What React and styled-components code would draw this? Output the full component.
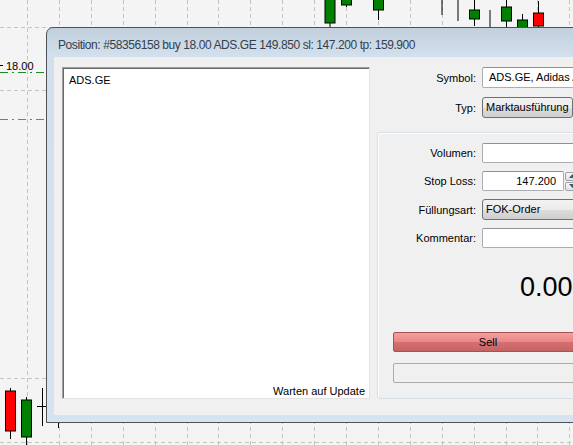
import React from 'react'
import styled, { createGlobalStyle } from 'styled-components'

const GlobalStyle = createGlobalStyle`
  html, body {
    margin: 0;
    padding: 0;
    background: #f4f4f4;
    overflow: hidden;
  }
  body {
    font-family: "Liberation Sans", Arial, sans-serif;
  }
`

// chart grid + candles behind the order window
const gridX = Array.from({ length: 18 }, (_, i) => 27 + i * 31.9)
const gridY = [27, 90, 378, 442]

const candles = [
  { x: 330, o: -10, c: 23, hi: -10, lo: 27, up: true },
  { x: 346.5, o: -10, c: 5, hi: -10, lo: 7, up: true },
  { x: 378.5, o: -10, c: 10, hi: -10, lo: 20, up: true },
  { x: 474.5, o: 10, c: 19, hi: 0, lo: 26, up: true },
  { x: 506.5, o: 7, c: 21, hi: 0, lo: 30, up: true },
  { x: 522.5, o: 20, c: 32, hi: 14, lo: 32, up: true },
  { x: 538.5, o: 13, c: 26, hi: 1, lo: 27, up: false },
  { x: 10.5, o: 391, c: 431, hi: 388, lo: 439, up: false },
  { x: 26.5, o: 400, c: 437, hi: 397, lo: 446, up: true },
]

const wicks = [
  { x: 442, y1: -2, y2: 15 },
  { x: 458, y1: -2, y2: 21 },
  { x: 490, y1: 10, y2: 30 },
  { x: 42.5, y1: 388, y2: 426 },
  { x: 58.5, y1: 422, y2: 428 },
]

const Screen = styled.div`
  position: relative;
  width: 573px;
  height: 445px;
  overflow: hidden;
  background: #f4f4f4;
`

const ChartLayer = styled.svg`
  position: absolute;
  left: 0;
  top: 0;
  display: block;
`

const LevelTag = styled.span`
  position: absolute;
  left: 6px;
  top: 60px;
  font-size: 11px;
  line-height: 13px;
  color: #000;
`

const Window = styled.div`
  position: absolute;
  left: 46px;
  top: 27px;
  width: 570px;
  height: 396px;
  box-sizing: border-box;
  border: 1px solid #4f5357;
  border-radius: 7px 7px 0 0;
  background: linear-gradient(#c2d0de, #d2dfec 28px, #d6e3f1);
  padding: 0 7px 7px;
  display: flex;
  flex-direction: column;
  overflow: hidden;
`

const TitleBar = styled.div`
  height: 29px;
  box-sizing: border-box;
  padding: 4px 0 0 4px;
  display: flex;
  align-items: center;
  font-size: 12px;
  letter-spacing: -0.42px;
  color: #34404c;
  white-space: nowrap;
`

const Client = styled.div`
  height: 358px;
  box-sizing: border-box;
  background: #f0f0f0;
  display: flex;
  align-items: flex-start;
  gap: 7px;
  padding: 10px 0 0 8px;
`

const ListBox = styled.div`
  width: 308px;
  height: 332px;
  flex: none;
  box-sizing: border-box;
  background: #fff;
  border-top: 1px solid #a0a0a0;
  border-left: 1px solid #a0a0a0;
  border-right: 1px solid #e3e3e3;
  border-bottom: 1px solid #e3e3e3;
  box-shadow: inset 1px 1px 0 #696969, inset -1px -1px 0 #fff;
  padding: 6px 4px 0 6px;
  display: flex;
  flex-direction: column;
  justify-content: space-between;
  font-size: 11px;
  line-height: 13px;
  color: #000;
`

const StatusLine = styled.div`
  text-align: right;
`

const Side = styled.div`
  width: 222px;
  flex: none;
  display: flex;
  flex-direction: column;
`

const Form = styled.div`
  display: grid;
  grid-template-columns: ${p => p.$labelWidth}px 1fr;
  column-gap: 6px;
  row-gap: ${p => p.$rowGap}px;
  align-items: center;
`

const Label = styled.label`
  text-align: right;
  font-size: 11px;
  color: #000;
  white-space: nowrap;
`

const TextBox = styled.div`
  height: ${p => p.$h}px;
  box-sizing: border-box;
  background: #fff;
  border: 1px solid #abadb3;
  border-top-color: #8e9198;
  border-radius: 2px;
  font-size: 11px;
  line-height: ${p => p.$h - 2}px;
  padding: 0 ${p => (p.$right ? 7 : 6)}px;
  text-align: ${p => (p.$right ? 'right' : 'left')};
  white-space: nowrap;
  overflow: hidden;
  color: #000;
  width: ${p => (p.$w ? `${p.$w}px` : 'auto')};
`

const Combo = styled.div`
  height: ${p => p.$h}px;
  box-sizing: border-box;
  border: 1px solid #707070;
  border-radius: 3px;
  background: linear-gradient(#f2f2f2, #ebebeb 50%, #dddddd 51%, #cfcfcf);
  font-size: 11px;
  line-height: ${p => p.$h - 2}px;
  padding: 0 3px;
  white-space: nowrap;
  overflow: hidden;
  width: ${p => (p.$w ? `${p.$w}px` : 'auto')};
`

const SpinRow = styled.div`
  display: flex;
  align-items: center;
  gap: 1px;
`

const Spin = styled.div`
  display: flex;
  flex-direction: column;
  gap: 1px;
`

const SpinButton = styled.div`
  width: 14px;
  height: 9px;
  box-sizing: border-box;
  border: 1px solid #9aa3ac;
  border-radius: 2px;
  background: linear-gradient(#f4f6f8, #dfe4ea);
  display: flex;
  align-items: center;
  justify-content: center;
`

const Group = styled.div`
  margin-top: 14px;
  height: 267px;
  box-sizing: border-box;
  border: 1px solid #d5dfe5;
  border-radius: 3px;
  box-shadow: inset 1px 1px 0 #fff;
  padding-top: 10px;
  display: flex;
  flex-direction: column;
`

const Price = styled.div`
  margin-top: 23px;
  padding-left: 142px;
  font-size: 27px;
  line-height: 32px;
  color: #000;
  white-space: nowrap;
`

const SellButton = styled.div`
  margin: 29px 15px 0;
  height: 20px;
  box-sizing: border-box;
  border: 1px solid #a55252;
  border-radius: 2px;
  background: linear-gradient(#f59e9e, #e98686 50%, #d67070 51%, #c46464);
  font-size: 11px;
  line-height: 18px;
  text-align: center;
  color: #000;
`

const EmptyButton = styled.div`
  margin: 11px 15px 0;
  height: 20px;
  box-sizing: border-box;
  border: 1px solid #acacac;
  border-radius: 2px;
  background: #f0f0f0;
`

function Arrow({ up }) {
  return (
    <svg width="7" height="4" viewBox="0 0 7 4">
      <path d={up ? 'M0 4 L3.5 0 L7 4 Z' : 'M0 0 L3.5 4 L7 0 Z'} fill="#4a5560" />
    </svg>
  )
}

function Chart() {
  return (
    <ChartLayer width="573" height="445" viewBox="0 0 573 445">
      {gridX.map(x => (
        <line key={'v' + x} x1={Math.round(x) + 0.5} y1="0" x2={Math.round(x) + 0.5} y2="445"
          stroke="#c4c4c4" strokeDasharray="4 3" />
      ))}
      {gridY.map(y => (
        <line key={'h' + y} x1="0" y1={y + 0.5} x2="573" y2={y + 0.5}
          stroke="#c4c4c4" strokeDasharray="4 3" />
      ))}
      <line x1="0" y1="72.5" x2="46" y2="72.5" stroke="#1f8a1f" strokeDasharray="8 4 2 4" />
      <line x1="0" y1="119.5" x2="46" y2="119.5" stroke="#e4572a" strokeDasharray="8 4 2 4" />
      <line x1="0" y1="65.5" x2="3" y2="65.5" stroke="#000" />
      {candles.map(c => (
        <g key={'c' + c.x}>
          <line x1={c.x} y1={c.hi} x2={c.x} y2={c.lo} stroke="#000" />
          <rect x={c.x - 5} y={c.o} width="10" height={c.c - c.o}
            fill={c.up ? '#008000' : '#ff0000'} stroke="#000" />
        </g>
      ))}
      {wicks.map(w => (
        <line key={'w' + w.x} x1={w.x} y1={w.y1} x2={w.x} y2={w.y2} stroke="#000" />
      ))}
      <line x1="37" y1="406.5" x2="46" y2="406.5" stroke="#000" />
    </ChartLayer>
  )
}

export default function App() {
  return (
    <Screen>
      <GlobalStyle />
      <Chart />
      <LevelTag>18.00</LevelTag>
      <Window>
        <TitleBar>Position: #58356158 buy 18.00 ADS.GE 149.850 sl: 147.200 tp: 159.900</TitleBar>
        <Client>
          <ListBox>
            <div>ADS.GE</div>
            <StatusLine>Warten auf Update</StatusLine>
          </ListBox>
          <Side>
            <Form $labelWidth={99} $rowGap={9}>
              <Label>Symbol:</Label>
              <TextBox $h={21}>ADS.GE, Adidas AG</TextBox>
              <Label>Typ:</Label>
              <Combo $h={21} $w={91}>Marktausführung</Combo>
            </Form>
            <Group>
              <Form $labelWidth={98} $rowGap={8}>
                <Label>Volumen:</Label>
                <TextBox $h={20} />
                <Label>Stop Loss:</Label>
                <SpinRow>
                  <TextBox $h={20} $w={82} $right>147.200</TextBox>
                  <Spin>
                    <SpinButton><Arrow up /></SpinButton>
                    <SpinButton><Arrow /></SpinButton>
                  </Spin>
                </SpinRow>
                <Label>Füllungsart:</Label>
                <Combo $h={21}>FOK-Order</Combo>
                <Label>Kommentar:</Label>
                <TextBox $h={20} />
              </Form>
              <Price>0.000</Price>
              <SellButton>Sell</SellButton>
              <EmptyButton />
            </Group>
          </Side>
        </Client>
      </Window>
    </Screen>
  )
}
